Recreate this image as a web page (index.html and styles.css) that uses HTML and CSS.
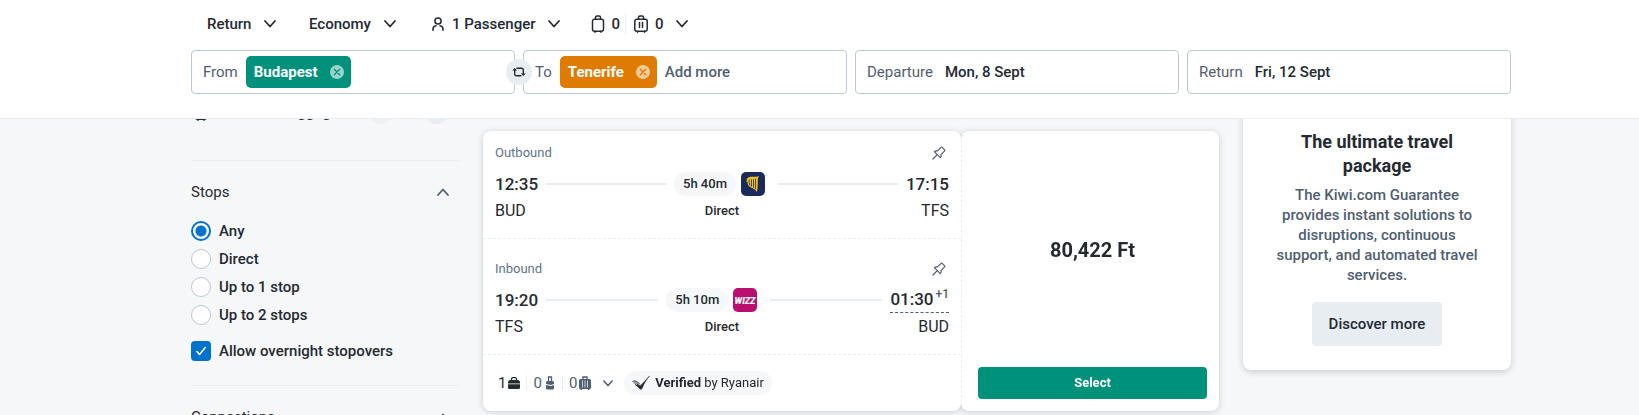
FILE: index.html
```
<!DOCTYPE html>
<html lang="en">
<head>
<meta charset="UTF-8">
<meta name="viewport" content="width=device-width, initial-scale=1.0">
<title>Budapest - Tenerife flights</title>
<link rel="stylesheet" href="styles.css">
</head>
<body>

<!-- Shared icons -->
<svg class="sprite" aria-hidden="true">
  <symbol id="chevron" viewBox="0 0 12 8"><path d="M1 1l5 5.500 5-5.500" fill="none" stroke="currentColor" stroke-width="1.800" stroke-linecap="round" stroke-linejoin="round"/></symbol>
  <symbol id="close" viewBox="0 0 14 14"><circle cx="7" cy="7" r="7" fill="#fff" fill-opacity=".6"/><path d="M4.300 4.300l5.400 5.400M9.700 4.300l-5.400 5.400" stroke="currentColor" stroke-width="1.300" stroke-linecap="round"/></symbol>
  <symbol id="suitcase" viewBox="0 0 14 18"><path d="M4.500 4V2.500a1.500 1.500 0 0 1 1.500-1.500h2a1.500 1.500 0 0 1 1.500 1.500V4M3.500 4.200h7a2 2 0 0 1 2 2v8a2 2 0 0 1-2 2h-7a2 2 0 0 1-2-2v-8a2 2 0 0 1 2-2zM4 16v1.200M10 16v1.200" fill="none" stroke="currentColor" stroke-width="1.500" stroke-linecap="round"/></symbol>
  <symbol id="pin" viewBox="0 0 14 14"><path d="M1 13l4.200-4.300M2.400 5.700l5.900 5.900c.8-.9 1-1.900.7-3l3.600-3.700c.4-.4.4-.7 0-1.100L10.200 1.300c-.4-.4-.7-.4-1.100 0L5.500 4.900c-1.100-.2-2.200 0-3.100.8z" fill="none" stroke="currentColor" stroke-width="1.200" stroke-linejoin="round" stroke-linecap="round"/></symbol>
</svg>

<header class="topbar">
  <div class="options">
    <label class="option">
      <select class="select select-trip" aria-label="Trip type"><option>Return</option></select>
      <svg class="chevron"><use href="#chevron"/></svg>
    </label>
    <label class="option option-cabin">
      <select class="select select-cabin" aria-label="Cabin class"><option>Economy</option></select>
      <svg class="chevron"><use href="#chevron"/></svg>
    </label>
    <button type="button" class="option option-passengers">
      <svg class="user" viewBox="0 0 12 14"><circle cx="6" cy="4" r="3.100" fill="none" stroke="currentColor" stroke-width="1.500"/><path d="M1 13.300v-1a3.500 3.500 0 0 1 3-3.500M11 13.300v-1a3.500 3.500 0 0 0-3-3.500" fill="none" stroke="currentColor" stroke-width="1.500" stroke-linecap="round"/></svg>
      <span>1 Passenger</span>
      <svg class="chevron"><use href="#chevron"/></svg>
    </button>
    <button type="button" class="option option-bags" aria-label="Bags">
      <span class="bag"><svg class="suitcase"><use href="#suitcase"/></svg>0</span>
      <span class="bag bag-last"><svg class="suitcase" viewBox="0 0 14 18"><path d="M4.500 4V2.500a1.500 1.500 0 0 1 1.500-1.500h2a1.500 1.500 0 0 1 1.500 1.500V4M2.800 4.200h8.400a2 2 0 0 1 2 2v8a2 2 0 0 1-2 2H2.800a2 2 0 0 1-2-2v-8a2 2 0 0 1 2-2zM3.500 16v1.200M10.500 16v1.200M5.500 7.500v5M8.500 7.500v5" fill="none" stroke="currentColor" stroke-width="1.500" stroke-linecap="round"/></svg>0</span>
      <svg class="chevron"><use href="#chevron"/></svg>
    </button>
  </div>

  <form class="search">
    <div class="field">
      <label for="from">From</label>
      <span class="chip chip-green">Budapest <button type="button" aria-label="Remove Budapest"><svg><use href="#close"/></svg></button></span>
      <input type="text" id="from">
      <button type="button" class="swap" aria-label="Swap places">
        <svg viewBox="0 0 14 10"><path d="M2.700 2.500V7a1.700 1.700 0 0 0 1.700 1.700H9M11.300 7.500V3A1.700 1.700 0 0 0 9.600 1.300H5" fill="none" stroke="currentColor" stroke-width="1.400" stroke-linecap="round"/><path d="M.3 3.600L2.700 1l2.400 2.600zM8.900 6.400L11.300 9l2.400-2.600z" fill="currentColor"/></svg>
      </button>
    </div>
    <div class="field">
      <label for="to">To</label>
      <span class="chip chip-orange">Tenerife <button type="button" aria-label="Remove Tenerife"><svg><use href="#close"/></svg></button></span>
      <input type="text" id="to" placeholder="Add more">
    </div>
    <div class="field field-date">
      <label for="departure">Departure</label>
      <input type="text" id="departure" value="Mon, 8 Sept">
    </div>
    <div class="field field-date">
      <label for="return">Return</label>
      <input type="text" id="return" value="Fri, 12 Sept">
    </div>
  </form>
</header>

<main class="page">
  <aside class="filters">
    <div class="baggage">
      <svg class="suitcase"><use href="#suitcase"/></svg>
      <span class="baggage-name">Checked baggage</span>
      <button type="button" class="step step-off" aria-label="Fewer bags">&minus;</button>
      <span class="count">0</span>
      <button type="button" class="step" aria-label="More bags">+</button>
    </div>

    <section class="filter">
      <button type="button" class="filter-head">Stops <svg class="chevron up"><use href="#chevron"/></svg></button>
      <div class="choices">
        <label><input type="radio" name="stops" checked> Any</label>
        <label><input type="radio" name="stops"> Direct</label>
        <label><input type="radio" name="stops"> Up to 1 stop</label>
        <label><input type="radio" name="stops"> Up to 2 stops</label>
      </div>
      <label class="overnight">
        <span class="tick"><input type="checkbox" checked><svg viewBox="0 0 20 20"><path d="M5.800 10.500l2.800 3 5.600-7" fill="none" stroke="#fff" stroke-width="1.500" stroke-linecap="round" stroke-linejoin="round"/></svg></span>
        Allow overnight stopovers
      </label>
    </section>

    <section class="filter">
      <button type="button" class="filter-head">Connections <svg class="chevron up"><use href="#chevron"/></svg></button>
    </section>
  </aside>

  <article class="result">
    <div class="journey">
      <section class="leg">
        <div class="leg-head">Outbound <button type="button" class="pin" aria-label="Pin outbound"><svg><use href="#pin"/></svg></button></div>
        <div class="times">
          <strong>12:35</strong>
          <span class="line"></span>
          <span class="duration">5h 40m</span>
          <svg class="carrier" viewBox="0 0 24 24" role="img" aria-label="Ryanair"><rect width="24" height="24" rx="5" fill="#1b2a5c"/><path d="M5.500 7c1.500-1.800 3-2.300 5-2.300 2.500 0 4 .5 7.500-.7-1 1.800-1.200 3.200-1.200 5 0 4-.2 7.500-.8 11-1.500-2.400-3.500-3.500-5.500-4.300-2.800-1.100-4-3-4-5.700L5 9.200l1.200-.9z" fill="#f1c21b"/><path d="M8.300 7.500c-.6 2-.3 4 1 6M10.500 7.300v7.200M12.500 7v8.700M14.500 6.700v10.500" fill="none" stroke="#1b2a5c" stroke-width=".8"/></svg>
          <span class="line line-after"></span>
          <strong>17:15</strong>
        </div>
        <div class="airports"><span>BUD</span><span class="stops">Direct</span><span class="arrival">TFS</span></div>
      </section>

      <section class="leg leg-inbound">
        <div class="leg-head">Inbound <button type="button" class="pin" aria-label="Pin inbound"><svg><use href="#pin"/></svg></button></div>
        <div class="times">
          <strong>19:20</strong>
          <span class="line"></span>
          <span class="duration">5h 10m</span>
          <svg class="carrier" viewBox="0 0 24 24" role="img" aria-label="Wizz Air"><rect width="24" height="24" rx="5" fill="#b9106f"/><text x="12" y="16" text-anchor="middle" class="wizz">WIZZ</text></svg>
          <span class="line line-after"></span>
          <strong class="next-day">01:30<sup>+1</sup></strong>
        </div>
        <div class="airports"><span>TFS</span><span class="stops">Direct</span><span class="arrival">BUD</span></div>
      </section>

      <div class="extras">
        <button type="button" class="bags" aria-label="Included bags">
          <span class="included dark">1 <svg viewBox="0 0 12 14"><path d="M3.500 4.500V3A1.500 1.500 0 0 1 5 1.700h2A1.500 1.500 0 0 1 8.500 3v1.500" fill="none" stroke="currentColor" stroke-width="1.300"/><path d="M2.500 4h7A2.500 2.500 0 0 1 12 6.500V7.500H0v-1A2.500 2.500 0 0 1 2.500 4zM0 8.300h12v3.200a1.500 1.500 0 0 1-1.500 1.500h-9A1.500 1.500 0 0 1 0 11.500z" fill="currentColor"/></svg></span>
          <span class="included">0 <svg class="narrow" viewBox="0 0 8 14"><path d="M2.500 5V1h3v4" fill="none" stroke="currentColor" stroke-width="1.300"/><path d="M1.500 5h5A1.500 1.500 0 0 1 8 6.500V8L5 9 0 8V6.500A1.500 1.500 0 0 1 1.500 5zM0 9l5 1 3-1v3.500A1 1 0 0 1 7 13.500H1a1 1 0 0 1-1-1z" fill="currentColor"/></svg></span>
          <span class="included">0 <svg viewBox="0 0 12 14"><path d="M4 3V1h4v2" fill="none" stroke="currentColor" stroke-width="1.400"/><path d="M1.500 3h9A1.500 1.500 0 0 1 12 4.500v7A1.500 1.500 0 0 1 10.500 13v1H9v-1H3v1H1.500v-1A1.500 1.500 0 0 1 0 11.500v-7A1.500 1.500 0 0 1 1.500 3z" fill="currentColor"/><path d="M3.500 4.500v7M6 4.500v7M8.500 4.500v7" stroke="#fff" stroke-width=".7"/></svg></span>
          <svg class="chevron small"><use href="#chevron"/></svg>
        </button>
        <span class="verified">
          <svg viewBox="0 0 18 14"><path d="M5.500 8l2.700 2L17.500 0C14 4 12 7.500 10.200 12.300c-.4 1.200-1.800 1.300-2.600.4L4.500 9.200z" fill="#252a31" stroke="#252a31" stroke-width=".5"/><path d="M.5 5.500c1.500-.8 3.500-.6 5 .5L8 8.500M1.500 7c1.500-.6 3 0 4.200 1M3 8.500l3 1.500" fill="none" stroke="#252a31" stroke-width="1"/></svg>
          <span><b>Verified</b> by Ryanair</span>
        </span>
      </div>
    </div>

    <div class="offer">
      <p class="price">80,422 Ft</p>
      <button type="button" class="select-btn">Select</button>
    </div>
  </article>

  <aside class="promo">
    <h2>The ultimate travel package</h2>
    <p>The Kiwi.com Guarantee provides instant solutions to disruptions, continuous support, and automated travel services.</p>
    <button type="button" class="discover">Discover more</button>
  </aside>
</main>

</body>
</html>
```

FILE: styles.css
```
* {
  margin: 0;
  padding: 0;
  box-sizing: border-box;
}

body {
  height: 100vh;
  display: flex;
  flex-direction: column;
  overflow: hidden;
  background: #f5f7f9;
  color: #252a31;
  font-family: Roboto, "Liberation Sans", sans-serif;
  font-size: 15px;
  font-weight: 500;
  line-height: 20px;
}

button,
input,
select {
  border: 0;
  background: none;
  color: inherit;
  font: inherit;
}

button {
  cursor: pointer;
}

svg {
  display: block;
  flex: none;
}

.sprite {
  position: absolute;
  width: 0;
  height: 0;
}

.chevron {
  width: 12px;
  height: 8px;
}

.suitcase {
  width: 14px;
  height: 18px;
}

/* Top bar */
.topbar {
  flex: none;
  padding: 2px 128px 24px 191px;
  background: #fff;
  border-bottom: 1px solid #e8edf1;
}

.options {
  display: flex;
  align-items: center;
  height: 44px;
  margin-bottom: 4px;
  padding-left: 16px;
}

.option {
  display: flex;
  align-items: center;
  gap: 12px;
}

.select {
  appearance: none;
  outline: 0;
}

.select-trip {
  width: 45px;
}

.select-cabin {
  width: 63px;
}

.option-cabin {
  margin-left: 33px;
}

.option-passengers {
  margin-left: 36px;
}

.option-bags {
  margin-left: 31px;
}

.user {
  width: 12px;
  height: 14px;
  margin-right: -4px;
}

.bag {
  display: flex;
  align-items: center;
  gap: 7px;
}

.bag-last {
  margin-left: -7px;
  padding-left: 8px;
  border-left: 1px solid #e8edf1;
}

.search {
  display: grid;
  grid-template-columns: repeat(4, minmax(0, 1fr));
  gap: 8px;
}

.field {
  position: relative;
  display: flex;
  align-items: center;
  gap: 8px;
  height: 44px;
  padding: 0 11px 1px;
  border: 1px solid #bac7d5;
  border-radius: 4px;
}

.field label {
  color: #4f5e71;
  font-weight: 400;
}

.field input {
  flex: 1;
  min-width: 0;
  outline: 0;
}

.field input::placeholder {
  color: #4f5e71;
  opacity: 1;
}

.field-date {
  gap: 12px;
}

.chip {
  display: flex;
  align-items: center;
  gap: 12px;
  height: 32px;
  padding: 0 7px 0 8px;
  border-radius: 5px;
  color: #fff;
  font-weight: 700;
}

.chip svg {
  width: 14px;
  height: 14px;
}

.chip-green {
  background: #00917b;
}

.chip-green button {
  color: #00917b;
}

.chip-orange {
  background: #df7b00;
}

.chip-orange button {
  color: #df7b00;
}

.swap {
  position: absolute;
  z-index: 1;
  top: 8px;
  right: -18px;
  display: flex;
  align-items: center;
  justify-content: center;
  width: 26px;
  height: 26px;
  border-radius: 50%;
  background: #e8edf1;
}

.swap svg {
  width: 14px;
  height: 10px;
}

/* Page columns */
.page {
  flex: 1;
  min-height: 0;
  display: grid;
  grid-template-columns: 268px 1fr 268px;
  align-items: start;
  gap: 24px;
  padding: 0 128px 0 191px;
  overflow: hidden;
}

/* Filters */
.filters {
  margin-top: -19px;
}

.baggage {
  display: flex;
  align-items: center;
  height: 24px;
  margin-bottom: 36px;
  padding: 0 10px 0 3px;
}

.baggage-name {
  flex: 1;
  margin-left: 11px;
}

.step {
  width: 24px;
  height: 24px;
  border-radius: 50%;
  background: #e8edf1;
}

.step-off {
  opacity: .5;
}

.count {
  width: 32px;
  text-align: center;
}

.filter {
  padding: 21px 0 24px;
  border-top: 1px solid #e8edf1;
}

.filter-head {
  display: flex;
  align-items: center;
  justify-content: space-between;
  width: 100%;
  padding-right: 10px;
  font-weight: 400;
}

.up {
  color: #4f5e71;
  transform: rotate(180deg);
}

.choices {
  display: grid;
  gap: 8px;
  margin: 19px 0 16px;
}

.filter label {
  display: flex;
  align-items: center;
  gap: 8px;
}

.filter input {
  appearance: none;
  width: 20px;
  height: 20px;
  border: 1px solid #bac7d5;
  border-radius: 50%;
  background: #fff;
}

.filter input[type="radio"]:checked {
  border: 2px solid #0172cb;
  background: radial-gradient(circle, #0172cb 5px, #fff 6px);
}

.filter input[type="checkbox"] {
  display: block;
  border: 0;
  border-radius: 4px;
  background: #0172cb;
}

.tick {
  display: grid;
}

.tick > * {
  grid-area: 1 / 1;
  width: 20px;
  height: 20px;
}

/* Result card */
.result {
  display: grid;
  grid-template-columns: 1fr 258px;
  margin-top: 12px;
  filter: drop-shadow(0 1px 3px rgba(37, 42, 49, .2));
}

.journey,
.offer {
  border-radius: 8px;
  background: #fff;
}

.leg {
  padding: 12px 12px 16px;
  border-bottom: 1px dashed #e8edf1;
}

.leg-inbound {
  padding-top: 20px;
}

.leg-head {
  display: flex;
  justify-content: space-between;
  align-items: center;
  margin-bottom: 9px;
  padding-right: 3px;
  color: #5f738c;
  font-size: 13px;
  font-weight: 400;
}

.pin {
  color: #4f5e71;
}

.pin svg {
  width: 14px;
  height: 14px;
}

.times {
  display: flex;
  align-items: center;
  height: 24px;
  margin-bottom: 4px;
}

.times strong {
  font-size: 17px;
  font-weight: 500;
}

.line {
  flex: 1;
  height: 2px;
  margin: 0 8px;
  background: #e8edf1;
}

.line-after {
  margin-left: 13px;
}

.duration {
  height: 24px;
  margin-right: 5px;
  padding: 0 9px;
  border-radius: 12px;
  background: #f5f7f9;
  font-size: 13px;
  line-height: 24px;
}

.carrier {
  width: 24px;
  height: 24px;
}

.wizz {
  fill: #fff;
  font: italic 900 9px Roboto, sans-serif;
}

.next-day {
  height: 26px;
  border-bottom: 1px dashed #4f5e71;
  line-height: 24px;
}

.next-day sup {
  margin-left: 2px;
  color: #4f5e71;
  font-size: 12px;
  line-height: 12px;
}

.airports {
  display: grid;
  grid-template-columns: 1fr auto 1fr;
  font-size: 16px;
  font-weight: 400;
  line-height: 22px;
}

.stops {
  font-size: 13px;
  font-weight: 500;
}

.arrival {
  text-align: right;
}

.extras {
  display: flex;
  align-items: center;
  gap: 11px;
  height: 56px;
  padding-left: 15px;
}

.bags {
  display: flex;
  align-items: center;
}

.included {
  display: flex;
  align-items: center;
  gap: 2px;
  padding-right: 6px;
  color: #4f5e71;
  font-weight: 400;
}

.included + .included {
  padding-left: 6px;
  border-left: 1px solid #e8edf1;
  line-height: 14px;
}

.included svg {
  width: 12px;
  height: 14px;
}

.included .narrow {
  width: 8px;
  margin: 0 2px;
}

.included.dark {
  color: #252a31;
}

.small {
  width: 10px;
  height: 7px;
  margin-left: 6px;
  color: #4f5e71;
}

.verified {
  display: flex;
  align-items: center;
  gap: 5px;
  height: 24px;
  padding: 0 8px;
  border-radius: 12px;
  background: #f5f7f9;
  font-size: 13px;
  font-weight: 400;
}

.verified svg {
  width: 18px;
  height: 14px;
}

.offer {
  display: flex;
  flex-direction: column;
  padding: 0 12px 12px 16px;
  border-left: 1px dashed #e8edf1;
}

.price {
  flex: 1;
  display: flex;
  align-items: center;
  justify-content: center;
  padding-top: 2px;
  font-size: 20px;
  font-weight: 700;
}

.select-btn {
  height: 32px;
  border-radius: 4px;
  background: #00917b;
  color: #fff;
  font-size: 13px;
  font-weight: 700;
}

/* Promo card */
.promo {
  margin-top: -21px;
  padding: 32px 28px 24px;
  border-radius: 8px;
  background: #fff;
  box-shadow: 0 2px 6px rgba(37, 42, 49, .2);
  text-align: center;
}

.promo h2 {
  margin-bottom: 7px;
  font-size: 18px;
  font-weight: 700;
  line-height: 24px;
}

.promo p {
  margin-bottom: 17px;
  color: #4f5e71;
}

.discover {
  height: 44px;
  padding: 0 17px;
  border-radius: 4px;
  background: #e8edf1;
}
```
